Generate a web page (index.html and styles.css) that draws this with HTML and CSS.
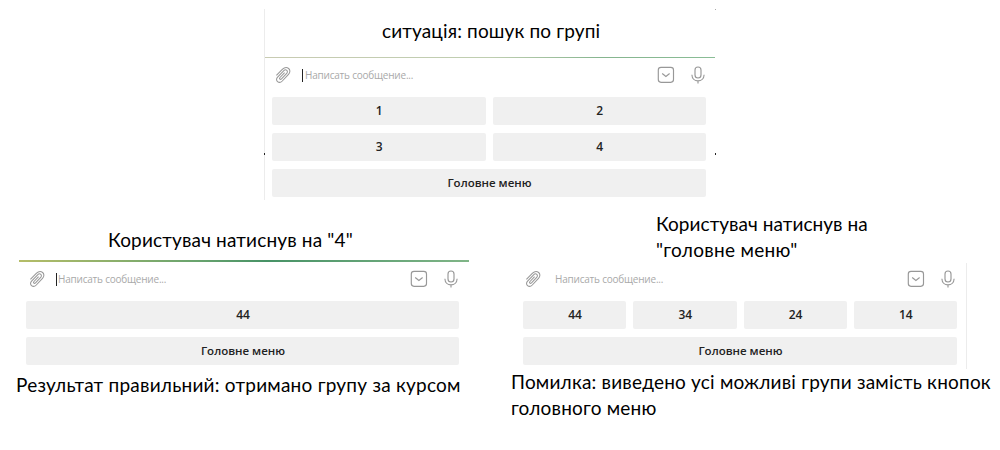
FILE: index.html
```
<!DOCTYPE html>
<html lang="uk">
<head>
<meta charset="utf-8">
<title>Пошук по групі</title>
<link rel="stylesheet" href="styles.css">
</head>
<body>
<svg class="defs" width="0" height="0">
  <symbol id="clip" viewBox="0 0 16 18"><path d="M1.4 9.4 7.3 3.4c4.6-4.6 10.2.6 6.2 4.9l-6.2 6.7c-3.3 3.3-7.8-.4-4.7-3.9l6-6.3c2.4-2.3 5.1.3 3.1 2.5l-5.2 5.6c-1.2 1.1-2.6-.2-1.5-1.4l4.6-4.8"/></symbol>
  <symbol id="box" viewBox="0 0 18 18"><rect x="1.3" y="1.3" width="15.2" height="15" rx="2.7"/><path d="m5.2 7.5 3.7 3 3.7-3"/></symbol>
  <symbol id="mic" viewBox="0 0 14 18"><rect x="4" y="1" width="6" height="11" rx="3"/><path d="M.9 8.8c.2 8.1 12 8.1 12.2 0M7 14.9v2.6"/></symbol>
</svg>
<main class="page">
  <section class="chat chat-top">
    <h1 class="note title">ситуація: пошук по групі</h1>
    <div class="rule rule-top"></div>
    <div class="compose">
      <svg class="clip"><use href="#clip"/></svg><i class="caret"></i><span class="hint">Написать сообщение...</span>
      <svg class="box"><use href="#box"/></svg><svg class="mic"><use href="#mic"/></svg>
    </div>
    <div class="keys two"><b>1</b><b>2</b><b>3</b><b>4</b><b class="wide label">Головне меню</b></div>
    <i class="dot dot-left"></i><i class="dot dot-right"></i><i class="dot dot-corner"></i>
  </section>
  <div class="results">
    <section class="left">
      <p class="note pressed-four">Користувач натиснув на "4"</p>
      <div class="chat chat-left">
        <div class="rule rule-left"></div>
        <div class="compose">
          <svg class="clip"><use href="#clip"/></svg><i class="caret"></i><span class="hint">Написать сообщение...</span>
          <svg class="box"><use href="#box"/></svg><svg class="mic"><use href="#mic"/></svg>
        </div>
        <div class="keys one"><b>44</b><b class="label">Головне меню</b></div>
      </div>
      <p class="note verdict-left">Результат правильний: отримано групу за курсом</p>
    </section>
    <section class="right">
      <p class="note pressed-menu">Користувач натиснув на<br><span class="quoted">"головне меню"</span></p>
      <div class="chat chat-right">
        <div class="compose">
          <svg class="clip"><use href="#clip"/></svg><i class="caret hidden"></i><span class="hint">Написать сообщение...</span>
          <svg class="box"><use href="#box"/></svg><svg class="mic"><use href="#mic"/></svg>
        </div>
        <div class="keys four"><b>44</b><b>34</b><b>24</b><b>14</b><b class="wide label">Головне меню</b></div>
      </div>
      <p class="note verdict-right">Помилка: виведено усі можливі групи замість кнопок<br>головного меню</p>
    </section>
  </div>
</main>
</body>
</html>
```
FILE: styles.css
```
* { box-sizing: border-box; }
body { margin: 0; background: #fff; color: #000; font-family: "Open Sans", sans-serif; }
.defs { display: none; }
.page { width: 1000px; height: 450px; padding-top: 9px; overflow: hidden; }
.note { margin: 0; font: 400 19px/26px Lato, "Open Sans", sans-serif; white-space: nowrap; }
.chat { width: 450px; }
.chat-top { position: relative; width: 451px; height: 191px; margin-left: 264px; border-left: 1px solid #ececec; }
.title { height: 48px; padding: 9px 0 0 117px; letter-spacing: .14px; }
.rule { height: 1px; }
.rule-top { background: linear-gradient(90deg, #c8cbb2, #bfceb0 50%, #86b58f 75%, #8abd96); }
.rule-left { height: 2px; background: linear-gradient(90deg, #b5bd68, #68a36e 40%, #479266 55%, #80b587); }
.compose { display: flex; align-items: center; height: 35px; padding: 0 0 1px 10px; }
.compose svg { fill: none; stroke: #989898; stroke-width: 1.15; flex: none; }
.clip { width: 16px; height: 18px; }
.compose .clip { stroke-width: 1.05; }
.caret { width: 1px; height: 13px; margin-left: 11px; background: #222; }
.hidden { visibility: hidden; }
.hint { width: 352px; margin-left: 2px; font-size: 10px; line-height: 16px; letter-spacing: -.21px; color: #a9a9a9; white-space: nowrap; }
.box { width: 18px; height: 18px; }
.mic { width: 14px; height: 18px; margin-left: 16px; }
.keys { display: grid; gap: 8px 7px; width: 434px; margin: 4px 0 0 7px; }
.two { grid-template-columns: 1fr 1fr; }
.one { grid-template-columns: 1fr; }
.four { grid-template-columns: repeat(4, 1fr); }
.wide { grid-column: 1 / -1; }
.keys b { height: 28px; border-radius: 2px; background: #f0f0f0; color: #222; font-size: 12px; line-height: 28px; font-weight: 600; text-align: center; padding-left: 1px; }
.keys .label { font-size: 11.5px; }
.dot { position: absolute; width: 1px; height: 2px; background: #222; }
.dot-left { left: -1px; top: 144px; }
.dot-right { right: -1px; top: 144px; }
.dot-corner { right: -1px; top: 0; height: 1px; background: #aaa; }
.results { display: grid; grid-template-columns: 500px 500px; }
.left { padding: 27px 0 0 19px; }
.pressed-four { padding-left: 89px; letter-spacing: .16px; }
.chat-left { height: 107px; margin-top: 7px; }
.chat-left .keys { width: 433px; }
.chat-left .hint { margin-left: 1px; }
.verdict-left { margin: 5px 0 0 -3px; letter-spacing: .23px; }
.right { padding: 11px 0 0 11px; }
.pressed-menu { padding-left: 145px; letter-spacing: .04px; }
.quoted { letter-spacing: .3px; }
.chat-right { height: 106px; margin-left: 5px; width: 451px; border-right: 1px solid #ececec; }
.chat-right .compose { height: 34px; padding: 0 0 2px 9px; }
.verdict-right { letter-spacing: .2px; }
```
